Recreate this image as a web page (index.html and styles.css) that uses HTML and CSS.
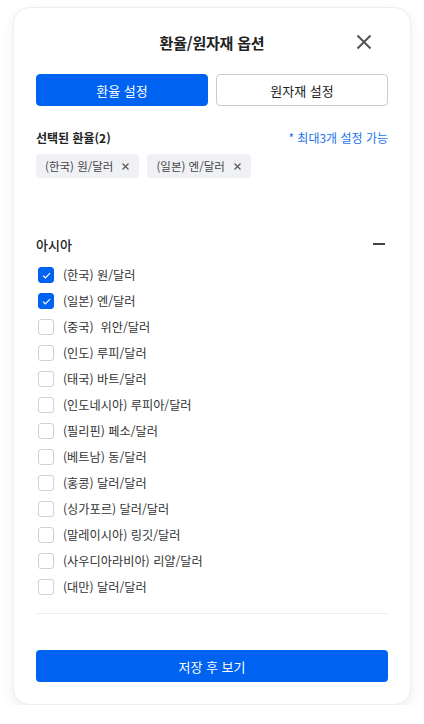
FILE: index.html
```html
<!DOCTYPE html>
<html lang="ko">
<head>
<meta charset="utf-8">
<link rel="stylesheet" href="styles.css">
</head>
<body>
<div class="card">
  <div class="header">
    <span></span>
    <h1 class="title">환율/원자재 옵션</h1>
    <button class="close" aria-label="닫기">
      <svg width="16" height="16" viewBox="0 0 16 16"><path d="M1.5 1.5 L14.5 14.5 M14.5 1.5 L1.5 14.5" stroke="#555" stroke-width="2" fill="none" stroke-linecap="butt"/></svg>
    </button>
  </div>
  <div class="tabs">
    <button class="tab active">환율 설정</button>
    <button class="tab">원자재 설정</button>
  </div>
  <div class="sel-head">
    <span class="sel-title">선택된 환율(2)</span>
    <span class="sel-note">* 최대3개 설정 가능</span>
  </div>
  <div class="chips">
    <span class="chip">(한국) 원/달러<svg class="chip-x" width="7" height="7" viewBox="0 0 7 7"><path d="M0.5 0.5 L6.5 6.5 M6.5 0.5 L0.5 6.5" stroke="#555" stroke-width="1.1"/></svg></span>
    <span class="chip">(일본) 엔/달러<svg class="chip-x" width="7" height="7" viewBox="0 0 7 7"><path d="M0.5 0.5 L6.5 6.5 M6.5 0.5 L0.5 6.5" stroke="#555" stroke-width="1.1"/></svg></span>
  </div>
  <div class="group-head">
    <span class="group-title">아시아</span>
    <span class="minus"></span>
  </div>
  <ul class="list">
    <li><span class="cb on"><svg width="9" height="7" viewBox="0 0 9 7"><path d="M1 3.6 L3.4 5.8 L8 1.2" stroke="#fff" stroke-width="1.2" fill="none"/></svg></span>(한국) 원/달러</li>
    <li><span class="cb on"><svg width="9" height="7" viewBox="0 0 9 7"><path d="M1 3.6 L3.4 5.8 L8 1.2" stroke="#fff" stroke-width="1.2" fill="none"/></svg></span>(일본) 엔/달러</li>
    <li><span class="cb"></span>(중국)&nbsp; 위안/달러</li>
    <li><span class="cb"></span>(인도) 루피/달러</li>
    <li><span class="cb"></span>(태국) 바트/달러</li>
    <li><span class="cb"></span>(인도네시아) 루피아/달러</li>
    <li><span class="cb"></span>(필리핀) 페소/달러</li>
    <li><span class="cb"></span>(베트남) 동/달러</li>
    <li><span class="cb"></span>(홍콩) 달러/달러</li>
    <li><span class="cb"></span>(싱가포르) 달러/달러</li>
    <li><span class="cb"></span>(말레이시아) 링깃/달러</li>
    <li><span class="cb"></span>(사우디아라비아) 리얄/달러</li>
    <li><span class="cb"></span>(대만) 달러/달러</li>
  </ul>
  <div class="sep"></div>
  <button class="save">저장 후 보기</button>
</div>
</body>
</html>
```

FILE: styles.css
```css
* { box-sizing: border-box; }
html, body { margin: 0; padding: 0; background: #fff; }
body {
  font-family: "Noto Sans CJK KR", "Noto Sans", sans-serif;
  color: #222;
}
.card {
  margin: 7px 13px 0;
  width: 398px;
  background: #fff;
  border: 1px solid #eceef2;
  border-radius: 16px;
  box-shadow: 0 6px 14px rgba(0, 0, 0, 0.07);
  padding: 19px 22px 22px;
}
.header {
  display: grid;
  grid-template-columns: 1fr auto 1fr;
  align-items: center;
  height: 30px;
  margin-bottom: 17px;
}
.title {
  margin: 0;
  font-size: 15px;
  font-weight: 700;
  color: #222;
  letter-spacing: -0.2px;
}
.close {
  justify-self: end;
  margin-right: 16px;
  width: 16px;
  height: 16px;
  padding: 0;
  border: 0;
  background: none;
  display: flex;
}
.tabs {
  display: flex;
  gap: 8px;
}
.tab {
  flex: 1;
  height: 32px;
  border: 1px solid #ccc;
  border-radius: 4px;
  background: #fff;
  font-family: inherit;
  font-size: 13px;
  color: #222;
  padding: 0;
}
.tab.active {
  background: #0062f1;
  border-color: #0062f1;
  color: #fff;
}
.sel-head {
  margin-top: 22px;
  height: 18px;
  display: flex;
  justify-content: space-between;
  align-items: center;
}
.sel-title {
  font-size: 12px;
  font-weight: 700;
  color: #222;
}
.sel-note {
  font-size: 12px;
  color: #1a73f0;
}
.chips {
  margin-top: 8px;
  display: flex;
  gap: 8px;
}
.chip {
  display: inline-flex;
  align-items: center;
  height: 24px;
  padding: 0 10px 0 9px;
  background: #f0f1f5;
  border-radius: 4px;
  font-size: 11.5px;
  color: #444;
  gap: 9px;
}
.group-head {
  margin-top: 56px;
  height: 20px;
  display: flex;
  justify-content: space-between;
  align-items: center;
}
.group-title {
  font-size: 13px;
  font-weight: 500;
  color: #222;
}
.minus {
  width: 12px;
  height: 2px;
  background: #444;
  margin-right: 3px;
}
.list {
  list-style: none;
  margin: 8px 0 0;
  padding: 0;
}
.list li {
  height: 26px;
  display: flex;
  align-items: center;
  font-size: 12.2px;
  color: #333;
}
.cb {
  width: 16px;
  height: 16px;
  margin-left: 2px;
  margin-right: 9px;
  border: 1px solid #cfd1d6;
  border-radius: 3px;
  background: #fff;
  display: flex;
  align-items: center;
  justify-content: center;
}
.cb.on {
  background: #0062f1;
  border-color: #0062f1;
}
.sep {
  margin-top: 13px;
  height: 1px;
  background: #eeeff1;
}
.save {
  display: block;
  width: 100%;
  margin-top: 36px;
  height: 32px;
  border: 0;
  border-radius: 4px;
  background: #0062f1;
  color: #fff;
  font-family: inherit;
  font-size: 13px;
  padding: 0;
}
```
